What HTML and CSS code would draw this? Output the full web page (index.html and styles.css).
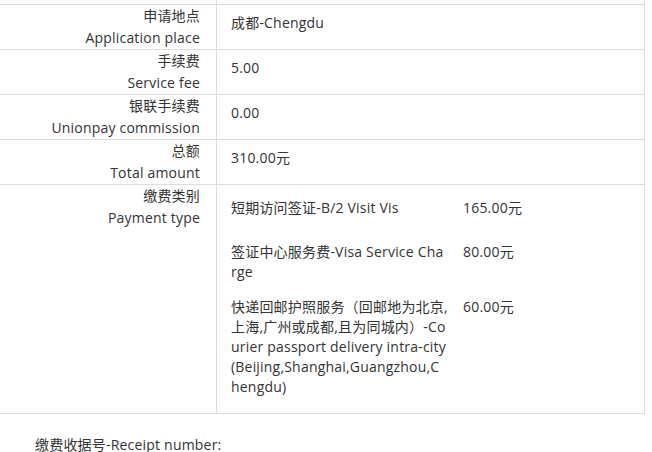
FILE: index.html
```html
<!DOCTYPE html>
<html>
<head>
<meta charset="utf-8">
<link rel="stylesheet" href="styles.css">
</head>
<body>
<table class="info">
  <tr class="cut"><td class="label"></td><td class="value"></td></tr>
  <tr>
    <td class="label">申请地点<br>Application place</td>
    <td class="value">成都-Chengdu</td>
  </tr>
  <tr>
    <td class="label">手续费<br>Service fee</td>
    <td class="value">5.00</td>
  </tr>
  <tr>
    <td class="label">银联手续费<br>Unionpay commission</td>
    <td class="value">0.00</td>
  </tr>
  <tr>
    <td class="label">总额<br>Total amount</td>
    <td class="value">310.00元</td>
  </tr>
  <tr>
    <td class="label top">缴费类别<br>Payment type</td>
    <td class="value items-cell">
      <div class="items">
        <div class="item first">
          <div class="name">短期访问签证-B/2 Visit Vis</div>
          <div class="amount">165.00元</div>
        </div>
        <div class="item">
          <div class="name">签证中心服务费-Visa Service Cha<br>rge</div>
          <div class="amount">80.00元</div>
        </div>
        <div class="item">
          <div class="name">快递回邮护照服务（回邮地为北京,<br>上海,广州或成都,且为同城内）-Co<br>urier passport delivery intra-city<br>(Beijing,Shanghai,Guangzhou,C<br>hengdu)</div>
          <div class="amount">60.00元</div>
        </div>
      </div>
    </td>
  </tr>
</table>
<p class="receipt">缴费收据号-Receipt number:</p>
</body>
</html>
```
FILE: styles.css
```css
html, body {
  margin: 0;
  padding: 0;
  background: #fff;
}
body {
  font-family: "Open Sans", "Noto Sans CJK SC", sans-serif;
  font-size: 14px;
  letter-spacing: 0.2px;
  color: #333;
}
.info {
  border-collapse: collapse;
  width: 645px;
  table-layout: fixed;
}
.info td {
  border: 1px solid #ddd;
  padding: 0;
  line-height: 22px;
  height: 44px;
  vertical-align: middle;
}
.info td.label {
  width: 200px;
  border-left: none;
  text-align: right;
  padding-right: 16px;
}
.info td.value {
  padding-left: 14px;
  padding-bottom: 8px;
  height: 36px;
}
.info tr.cut td {
  height: 4px;
  padding-bottom: 0;
  border-top: none;
  line-height: 4px;
}
.info td.top {
  vertical-align: top;
}
.info td.items-cell {
  height: auto;
  padding-top: 13px;
  padding-bottom: 16px;
  vertical-align: top;
  line-height: 20px;
}
.items {
  display: flex;
  flex-direction: column;
  gap: 15px;
}
.item {
  display: grid;
  grid-template-columns: 217px auto;
  column-gap: 15px;
}
.item.first {
  min-height: 29px;
}
.name {
  white-space: nowrap;
}
.amount {
  white-space: nowrap;
}
.receipt {
  margin: 20px 0 0;
  padding-left: 35px;
  line-height: 22px;
}
```
